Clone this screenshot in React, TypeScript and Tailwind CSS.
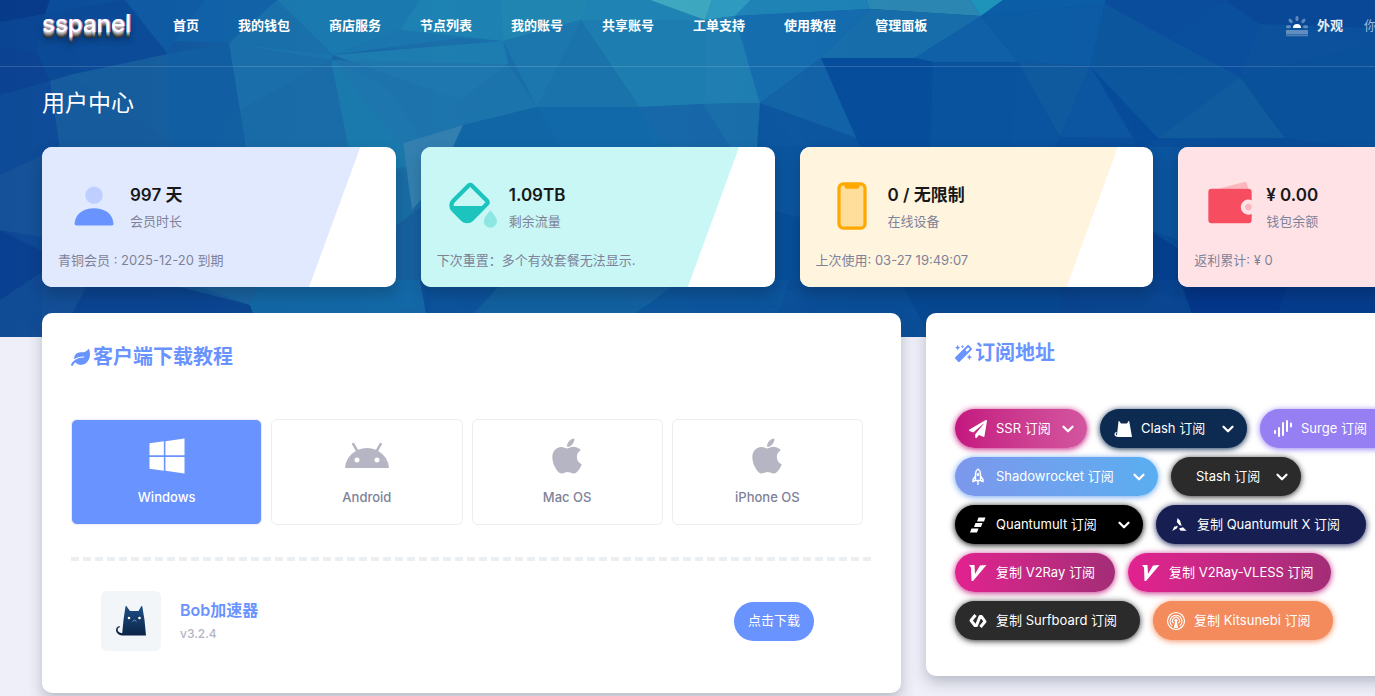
import React from "react";
import { clsx } from "clsx";
import { FaApple, FaLeaf, FaMagic, FaPaperPlane, FaWindows } from "react-icons/fa";
import { MdAndroid } from "react-icons/md";
import { FiChevronDown } from "react-icons/fi";

const navItems = [
  "首页",
  "我的钱包",
  "商店服务",
  "节点列表",
  "我的账号",
  "共享账号",
  "工单支持",
  "使用教程",
  "管理面板",
];

/** Facets of the header backdrop: [fill, points] */
const facets: [string, string][] = [
  // top row
  ["#073a88", "0,0 50,0 45,14 0,22"],
  ["#0a4594", "0,22 45,14 36,51 0,49"],
  ["#0b4d9a", "50,0 125,0 140,14 45,14"],
  ["#0a4a96", "45,14 125,0 168,54 70,75 50,81 36,51"],
  ["#0f5ca4", "125,0 205,0 173,41 168,54"],
  ["#1163a8", "205,0 277,0 229,43 173,41"],
  ["#1a72ac", "277,0 333,55 229,43"],
  ["#1b7cb0", "277,0 318,0 420,0 400,30 333,55"],
  ["#1c78b0", "400,30 503,41 460,38 333,55"],
  ["#1f86b4", "420,0 500,0 503,41 400,30"],
  ["#2389b4", "500,0 590,0 581,20 503,41"],
  ["#2187b6", "590,0 650,0 705,20 581,20"],
  ["#45b3c4", "650,0 712,0 705,20"],
  ["#34a3c4", "712,0 751,0 735,16 705,20"],
  ["#2289ba", "751,0 866,0 870,9 735,16"],
  ["#3190b6", "866,0 970,0 981,16 870,9"],
  ["#23a0c0", "970,0 1003,0 981,16"],
  ["#0c60a8", "1003,0 1105,0 1105,4 981,16"],
  ["#0a4e9e", "1105,0 1225,0 1170,38 1105,4"],
  ["#0a509e", "1225,0 1260,24 1240,77 1170,38"],
  ["#094896", "1225,0 1375,0 1375,43 1260,24"],
  ["#0c529c", "1260,24 1375,28 1375,43 1240,77"],
  // nav row
  ["#0c4292", "0,49 36,51 50,81 0,95"],
  ["#115da2", "168,54 229,43 240,110 165,138 70,75"],
  ["#1c78ae", "229,43 333,55 331,60 240,110"],
  ["#1e79b0", "503,41 581,20 640,107 537,107"],
  ["#2080b2", "333,55 503,41 508,64 460,100"],
  ["#1b72aa", "581,20 620,66 640,107 537,107"],
  ["#1f80b2", "581,20 705,20 705,104 640,107 612,66"],
  ["#2282b4", "705,20 735,16 760,103 705,104"],
  ["#1670b0", "735,16 870,9 821,58 760,103"],
  ["#1a72ac", "870,9 981,16 915,58 821,58"],
  ["#1063a8", "981,16 1018,62 933,62 915,58"],
  ["#0d5ea6", "981,16 1105,4 1090,66 1018,62"],
  ["#0d589e", "1105,4 1240,77 1090,66"],
  // middle band
  ["#0e4b98", "0,95 50,81 60,147 0,175"],
  ["#175e9e", "50,81 70,75 168,54 168,150 60,150"],
  ["#125fa2", "168,54 229,43 246,147 168,150"],
  ["#1a6da8", "229,43 331,60 353,147 246,147"],
  ["#1b7cae", "331,60 390,90 440,170 353,170"],
  ["#1f76ae", "331,60 508,64 463,125 420,170"],
  ["#1c75ac", "508,64 537,107 463,125"],
  ["#1165a6", "463,125 537,107 640,107 660,160 412,210 403,143"],
  ["#136aaa", "537,107 640,107 665,147 560,147"],
  ["#1767a8", "640,107 703,104 730,147 665,147"],
  ["#1b70aa", "703,104 760,103 757,147 730,147"],
  ["#1464a8", "760,103 821,58 857,138 800,147"],
  ["#0c559f", "760,103 857,138 860,150 757,150"],
  ["#064c9b", "821,58 915,58 933,62 930,147 860,147"],
  ["#08529f", "933,62 1018,62 1018,147 930,147"],
  ["#0b549f", "1018,62 1060,137 1055,150 1010,150"],
  ["#115ca0", "1018,62 1090,66 1060,137"],
  ["#0c57a2", "1090,66 1140,138 1060,137"],
  ["#064b9a", "1090,66 1158,138 1140,150"],
  ["#0d589f", "1090,66 1240,77 1158,138"],
  ["#125d9f", "1240,77 1285,138 1158,138"],
  ["#0b529c", "1240,77 1375,43 1375,150 1285,138"],
  // gaps between the cards and the strip below them
  ["#18539a", "0,175 60,147 60,240 0,230"],
  ["#0b4090", "0,230 60,260 42,337 0,300"],
  ["#1a6da6", "390,170 440,160 430,220 390,230"],
  ["#3a84b2", "463,125 403,143 412,210 438,180"],
  ["#175f9f", "390,230 430,200 430,337 380,290"],
  ["#0b539f", "770,147 810,147 810,220 770,210"],
  ["#064c99", "770,210 810,220 810,290 770,290"],
  ["#0c569f", "1150,147 1180,147 1180,240 1150,230"],
  ["#05408f", "1150,230 1180,250 1180,300 1150,290"],
  ["#124e96", "0,300 60,260 66,337 0,337"],
  ["#145098", "42,280 90,280 66,337 42,337"],
  ["#0b4390", "90,280 180,287 250,305 262,337 60,337"],
  ["#1b65a2", "180,280 260,280 250,305"],
  ["#136aa8", "250,305 260,280 420,280 430,337 262,337"],
  ["#0b4f9b", "420,280 505,280 470,320 430,337"],
  ["#1260a0", "505,280 560,280 650,303 600,337 450,337"],
  ["#145fa0", "560,280 680,280 650,303"],
  ["#0c539c", "650,303 680,280 790,280 770,337 600,337"],
  ["#0a4d98", "790,280 900,280 930,337 770,337"],
  ["#074690", "900,280 1060,280 1100,310 1060,337 930,337"],
  ["#0a4590", "1060,280 1180,280 1200,337 1060,337"],
  ["#04348a", "1180,280 1290,280 1270,337 1200,337"],
  ["#063b8c", "1290,280 1375,280 1375,337 1270,337"],
];

function Backdrop() {
  return (
    <svg
      className="absolute inset-x-0 top-0 -z-10 h-[337px] w-full"
      viewBox="0 0 1375 337"
      preserveAspectRatio="none"
      aria-hidden="true"
    >
      <defs>
        <linearGradient id="sea" x1="0" x2="1" y1="0" y2="0">
          <stop offset="0" stopColor="#0d4795" />
          <stop offset="0.32" stopColor="#1a70aa" />
          <stop offset="0.5" stopColor="#176aa8" />
          <stop offset="0.65" stopColor="#08509d" />
          <stop offset="1" stopColor="#094c98" />
        </linearGradient>
      </defs>
      <rect width="1375" height="337" fill="url(#sea)" />
      {facets.map(([fill, points]) => (
        <polygon key={points} points={points} fill={fill} fillOpacity="0.85" />
      ))}
    </svg>
  );
}

function SunriseIcon() {
  return (
    <svg viewBox="0 0 24 24" className="h-6 w-6" fill="#fff" aria-hidden="true">
      <path d="M8 14a4 4 0 0 1 8 0z" />
      <g opacity="0.35">
        <rect x="10.5" y="2" width="3" height="5" rx="1.5" />
        <rect x="10.5" y="2" width="3" height="5" rx="1.5" transform="rotate(-42 12 14)" />
        <rect x="10.5" y="2" width="3" height="5" rx="1.5" transform="rotate(42 12 14)" />
        <rect x="1" y="11.2" width="5" height="3" rx="1.5" />
        <rect x="18" y="11.2" width="5" height="3" rx="1.5" />
        <rect x="1" y="16" width="22" height="4.5" />
        <rect x="1" y="21.2" width="22" height="1" />
      </g>
    </svg>
  );
}

function UserIcon() {
  return (
    <svg viewBox="0 0 24 24" className="size-[52px]" fill="#6993ff" aria-hidden="true">
      <circle cx="12" cy="7" r="4" opacity="0.3" />
      <path d="M3 20.2C3.39 15.43 7.26 13 11.98 13c4.79 0 8.72 2.29 9.02 7.2.01.2 0 .8-.75.8H3.73c-.25 0-.75-.54-.73-.8z" />
    </svg>
  );
}

function BucketIcon() {
  return (
    <svg viewBox="0 0 24 24" className="size-[52px]" fill="#1bc5bd" aria-hidden="true">
      <path
        transform="rotate(45 10 11)"
        d="M5 5v10c0 .6.26 1.13.67 1.5l.14.12L15 7.45V5zM5 3h10a2 2 0 0 1 2 2v10a4 4 0 0 1-4 4H7a4 4 0 0 1-4-4V5a2 2 0 0 1 2-2z"
      />
      <path
        opacity="0.35"
        d="M20 22a3 3 0 0 0 3-3c0-1.1-1-2.77-3-5-2 2.23-3 3.9-3 5a3 3 0 0 0 3 3z"
      />
    </svg>
  );
}

function PhoneIcon() {
  return (
    <svg viewBox="0 0 24 24" className="size-[52px]" fill="#ffa800" aria-hidden="true">
      <rect x="6.5" y="2.3" width="11" height="19.4" rx="1.3" opacity="0.3" />
      <path
        fillRule="evenodd"
        d="M8 1h8a2.75 2.75 0 0 1 2.75 2.75v16.5A2.75 2.75 0 0 1 16 23H8a2.75 2.75 0 0 1-2.75-2.75V3.75A2.75 2.75 0 0 1 8 1zm0 1.5c-.7 0-1.25.55-1.25 1.25v16.5c0 .7.55 1.25 1.25 1.25h8c.7 0 1.25-.55 1.25-1.25V3.75c0-.7-.55-1.25-1.25-1.25h-.5v.5a1 1 0 0 1-1 1h-5a1 1 0 0 1-1-1v-.5z"
      />
    </svg>
  );
}

function WalletIcon() {
  return (
    <svg viewBox="0 0 24 24" className="size-[52px]" fill="#f64e60" aria-hidden="true">
      <path opacity="0.3" d="M6.5 4 18.6.9c.5-.1 1 .1 1.1.6L20.5 4z" />
      <circle cx="20.5" cy="12.5" r="1.5" opacity="0.3" />
      <path d="M22 9.34A3.5 3.5 0 1 0 22 15.66V18.5a1.5 1.5 0 0 1-1.5 1.5h-17A1.5 1.5 0 0 1 2 18.5V5.5A1.5 1.5 0 0 1 3.5 4h17A1.5 1.5 0 0 1 22 5.5z" />
    </svg>
  );
}

function CatLogo() {
  return (
    <svg viewBox="0 0 60 60" className="size-[60px]" aria-hidden="true">
      <defs>
        <linearGradient id="cat" x1="0" x2="0" y1="0" y2="1">
          <stop offset="0" stopColor="#1c4f86" />
          <stop offset="1" stopColor="#0c2447" />
        </linearGradient>
      </defs>
      <path
        fill="url(#cat)"
        d="M24.5 15.5c.3-.6.8-.5 1.2 0L29 20h8.5l2.6-4.5c.4-.6 1-.6 1.2.1L43.500 29 45 44.500H23c-5 0-8-2.300-8-5.800 0-2 1.500-3.600 3.500-3.800l.5 1.300c-1.500.3-2.300 1.200-2.300 2.400 0 2.100 1.600 3.400 4.500 3.600L22.500 29z"
      />
      <circle cx="28" cy="27" r="1.3" fill="#fff" />
      <circle cx="38.500" cy="27" r="1.3" fill="#fff" />
      <path d="M31.500 30.500 33.500 29l2 1.500" stroke="#8095b3" fill="none" />
    </svg>
  );
}

const glyph = "h-[18px] w-[20px] shrink-0";

function CatGlyph() {
  return (
    <svg viewBox="0 0 20 18" className={glyph} fill="#fff" aria-hidden="true">
      <path d="M5.500 1.500c.2-.6.700-.6 1 0L8 3.500h6l1.200-2.100c.4-.6 1-.4 1.100.2L19 17H5.500C3 17 1.500 16 1.500 14.300c0-1.200.8-2 2-2.200L3.700 13c-.6.200-.9.500-.9 1.100 0 .7.400 1.100 1.100 1.300z" />
    </svg>
  );
}

function BarsGlyph() {
  return (
    <svg viewBox="0 0 20 18" className={glyph} stroke="#fff" strokeWidth="2" strokeLinecap="round" aria-hidden="true">
      <path d="M2 11v2M6 8v8M10 3v12M14 1v10M18 3.500v3" />
    </svg>
  );
}

function RocketGlyph() {
  return (
    <svg viewBox="0 0 20 18" className={glyph} fill="none" stroke="#fff" strokeWidth="1.4" aria-hidden="true">
      <path d="M7.500 12.500V6c0-2 1-4 2.500-5 1.500 1 2.500 3 2.500 5v6.500zM7.500 8 5 11.500v2l2.500-1M12.500 8l2.500 3.500v2l-2.500-1M10 12.500V17" />
      <circle cx="10" cy="6.5" r="0.8" />
    </svg>
  );
}

function StripesGlyph() {
  return (
    <svg viewBox="0 0 20 18" className={glyph} fill="#fff" aria-hidden="true">
      <path d="M10.500 1.500h7l-1.500 4H9zM7.500 7h7L13 11H6zM3.500 12.500h7l-1.500 4H2z" />
    </svg>
  );
}

function TriadGlyph() {
  return (
    <svg viewBox="0 0 20 18" className={glyph} fill="#fff" aria-hidden="true">
      <path d="M8.500 2 11 4.500l1.700 5.200-2.200-.5L7.800 6zM3.200 15l2-4.200L8.800 9.800l-.8 2.500zM10 12.500l4-1.200 3.600 3.500h-6z" />
    </svg>
  );
}

function VGlyph() {
  return (
    <svg viewBox="0 0 20 18" className={glyph} fill="#fff" aria-hidden="true">
      <path d="M1 1h5.500l.5 9L12 1.500 18.500 1 5 17H3.500L3 3.500z" />
    </svg>
  );
}

function SurfGlyph() {
  return (
    <svg viewBox="0 0 20 18" className={glyph} fill="none" stroke="#fff" strokeWidth="3" aria-hidden="true">
      <path d="M7.500 3 3 8.500 7 13.500h1.500L12 4.500h1.500L17 9.500 12.500 15" strokeLinejoin="round" />
    </svg>
  );
}

function BroadcastGlyph() {
  return (
    <svg viewBox="0 0 20 20" className="h-[20px] w-[20px] shrink-0" fill="none" stroke="#fff" aria-hidden="true">
      <circle cx="10" cy="10" r="8.500" strokeWidth="1.2" />
      <path d="M6.300 15A6 6 0 1 1 13.700 15M7.500 12.200a3.500 3.500 0 1 1 5 0" strokeWidth="1.100" />
      <circle cx="10" cy="9.500" r="1.200" fill="#fff" />
      <path d="M9 11h2l1 6H8z" fill="#fff" stroke="none" />
    </svg>
  );
}

interface StatCardProps {
  icon: React.ReactNode;
  tint: string;
  value: string;
  label: string;
  note: string;
}

function StatCard({ icon, tint, value, label, note }: StatCardProps) {
  return (
    <div className="overflow-hidden rounded-[10px] bg-white shadow-[0_8px_16px_rgba(0,0,0,0.2)]">
      <div
        className={clsx(
          "h-[140px] px-4 pt-[33px] [clip-path:polygon(0_0,90%_0,75.5%_100%,0_100%)]",
          tint
        )}
      >
        <div className="flex items-center gap-[10px] pl-[10px]">
          {icon}
          <div>
            <div className="text-[17px] leading-[26px] font-semibold text-[#181818]">{value}</div>
            <div className="mt-[3px] text-[13px] leading-[20px] text-[#7e8299]">{label}</div>
          </div>
        </div>
        <div className="mt-[18px] text-[13px] leading-[20px] text-[#7e8299]">{note}</div>
      </div>
    </div>
  );
}

const platforms = [
  { name: "Windows", icon: <FaWindows className="size-10" />, active: true },
  { name: "Android", icon: <MdAndroid className="size-12" />, active: false },
  { name: "Mac OS", icon: <FaApple className="size-10" />, active: false },
  { name: "iPhone OS", icon: <FaApple className="size-10" />, active: false },
];

const subscriptions = [
  {
    label: "SSR 订阅",
    icon: <FaPaperPlane className={glyph} />,
    menu: true,
    style: "w-[132px] bg-linear-to-r from-[#c4157f] to-[#d355a0] shadow-[0_1px_6px_#c4157f]",
  },
  {
    label: "Clash 订阅",
    icon: <CatGlyph />,
    menu: true,
    style: "w-[147px] bg-[#0d2a50] shadow-[0_1px_6px_#0d2a50]",
  },
  {
    label: "Surge 订阅",
    icon: <BarsGlyph />,
    menu: true,
    style: "w-[150px] bg-[#957ff2] shadow-[0_1px_6px_#957ff2]",
  },
  {
    label: "Shadowrocket 订阅",
    icon: <RocketGlyph />,
    menu: true,
    style: "w-[203px] bg-linear-to-r from-[#7c98ec] to-[#59aef0] shadow-[0_1px_6px_#6ca4ee]",
  },
  {
    label: "Stash 订阅",
    icon: null,
    menu: true,
    style: "w-[130px] pl-[25px] bg-[#2b2b2b] shadow-[0_1px_6px_#2b2b2b]",
  },
  {
    label: "Quantumult 订阅",
    icon: <StripesGlyph />,
    menu: true,
    style: "w-[188px] bg-black shadow-[0_1px_6px_#000]",
  },
  {
    label: "复制 Quantumult X 订阅",
    icon: <TriadGlyph />,
    menu: false,
    style: "w-[210px] bg-[#161e52] shadow-[0_1px_6px_#161e52]",
  },
  {
    label: "复制 V2Ray 订阅",
    icon: <VGlyph />,
    menu: false,
    style: "w-[160px] bg-linear-to-r from-[#e2218f] to-[#a32d77] shadow-[0_1px_6px_#c22784]",
  },
  {
    label: "复制 V2Ray-VLESS 订阅",
    icon: <VGlyph />,
    menu: false,
    style: "w-[203px] bg-linear-to-r from-[#e2218f] to-[#a32d77] shadow-[0_1px_6px_#c22784]",
  },
  {
    label: "复制 Surfboard 订阅",
    icon: <SurfGlyph />,
    menu: false,
    style: "w-[185px] bg-[#2b2b2b] shadow-[0_1px_6px_#2b2b2b]",
  },
  {
    label: "复制 Kitsunebi 订阅",
    icon: <BroadcastGlyph />,
    menu: false,
    style: "w-[180px] bg-[#f38b5c] shadow-[0_1px_6px_#f38b5c]",
  },
];

export default function App() {
  return (
    <div className="min-h-screen overflow-hidden bg-[#eeeff8] font-[Inter,'Noto_Sans_CJK_SC',sans-serif] text-[13px]">
      <div className="relative isolate min-w-[1574px]">
        <div className="absolute inset-y-0 left-0 -z-10 w-screen">
          <Backdrop />
        </div>

        {/* HEADER */}
        <header className="flex h-[67px] items-center border-b border-white/15 px-[42px] pb-[14px] text-white">
          <a
            href="#"
            className="w-[131px] pb-[4px] text-[24px] leading-[32px] font-medium [text-shadow:1px_0_#d98ad0,0_1px_#ccc,0_2px_#aaa,0_3px_#888,0_4px_#666,0_5px_#444,0_6px_#333,0_8px_6px_rgba(0,0,0,0.5)]"
          >
            sspanel
          </a>
          <nav className="flex gap-[39px] font-bold">
            {navItems.map((item) => (
              <a key={item} href="#">
                {item}
              </a>
            ))}
          </nav>
          <div className="ml-auto flex w-[247px] items-center">
            <button type="button" className="flex items-center gap-2 font-bold text-white/90">
              <SunriseIcon />
              外观
            </button>
            <span className="ml-[21px] text-white/60">你好</span>
          </div>
        </header>

        <main className="px-[42px] pt-[20px] pb-8">
          <h1 className="text-[23px] leading-[32px] text-white">用户中心</h1>

          {/* STATS */}
          <section className="mt-[28px] grid grid-cols-4 gap-[25px]">
            <StatCard
              icon={<UserIcon />}
              tint="bg-[#e1e9ff]"
              value="997 天"
              label="会员时长"
              note="青铜会员 : 2025-12-20 到期"
            />
            <StatCard
              icon={<BucketIcon />}
              tint="bg-[#c9f7f5]"
              value="1.09TB"
              label="剩余流量"
              note="下次重置：多个有效套餐无法显示."
            />
            <StatCard
              icon={<PhoneIcon />}
              tint="bg-[#fff4de]"
              value="0 / 无限制"
              label="在线设备"
              note="上次使用: 03-27 19:49:07"
            />
            <StatCard
              icon={<WalletIcon />}
              tint="bg-[#ffe2e5]"
              value="¥ 0.00"
              label="钱包余额"
              note="返利累计: ¥ 0"
            />
          </section>

          <div className="mt-[26px] grid grid-cols-[859fr_606fr] items-start gap-[25px]">
            {/* CLIENTS */}
            <section className="rounded-[10px] bg-white px-[29px] pt-[29px] pb-[42px] shadow-[0_6px_14px_rgba(60,65,90,0.3)]">
              <h2 className="flex items-center gap-[3px] text-[20px] leading-[30px] font-bold text-[#6993ff]">
                <FaLeaf className="size-[19px]" />
                客户端下载教程
              </h2>
              <div className="mt-[47px] grid grid-cols-4">
                {platforms.map(({ name, icon, active }) => (
                  <button
                    key={name}
                    type="button"
                    className={clsx(
                      "mr-[9px] flex h-[106px] flex-col items-center rounded-md border border-[#ebedf3] pt-[8px] font-medium",
                      active ? "bg-[#6993ff] text-white" : "text-[#7e8299]"
                    )}
                  >
                    <span
                      className={clsx(
                        "flex h-[56px] items-center",
                        active ? "text-white" : "text-[#b5b5c3]"
                      )}
                    >
                      {icon}
                    </span>
                    <span className="mt-[3px] leading-[20px]">{name}</span>
                  </button>
                ))}
              </div>
              <div className="mt-[32px] h-1 bg-[repeating-linear-gradient(90deg,#ebeff2_0_8px,transparent_8px_12px)]" />
              <div className="mt-[30px] flex items-center pr-[58px] pl-[30px]">
                <div className="rounded-md bg-[#f3f6f9]">
                  <CatLogo />
                </div>
                <div className="ml-[19px]">
                  <a href="#" className="text-[16px] leading-[24px] font-semibold text-[#6993ff]">
                    Bob加速器
                  </a>
                  <div className="mt-[2px] text-[12px] leading-[20px] font-medium text-[#b5b5c3]">
                    v3.2.4
                  </div>
                </div>
                <button
                  type="button"
                  className="ml-auto h-[39px] w-[80px] rounded-full bg-[#6993ff] text-white"
                >
                  点击下载
                </button>
              </div>
            </section>

            {/* SUBSCRIPTIONS */}
            <section className="rounded-[10px] bg-white px-[29px] pt-[25px] pb-[27px] shadow-[0_6px_14px_rgba(60,65,90,0.3)]">
              <h2 className="flex items-center gap-[3px] text-[20px] leading-[30px] font-bold text-[#6993ff]">
                <FaMagic className="size-[17px]" />
                订阅地址
              </h2>
              <div className="mt-[41px] flex flex-wrap">
                {subscriptions.map(({ label, icon, menu, style }) => (
                  <button
                    key={label}
                    type="button"
                    className={clsx(
                      "mr-[13px] mb-[9px] flex h-[39px] items-center gap-2 rounded-full pr-[10px] whitespace-nowrap text-white",
                      icon && "pl-[13px]",
                      style
                    )}
                  >
                    {icon}
                    {label}
                    {menu && <FiChevronDown className="ml-auto size-[18px] shrink-0" strokeWidth={3} />}
                  </button>
                ))}
              </div>
            </section>
          </div>
        </main>
      </div>
    </div>
  );
}
